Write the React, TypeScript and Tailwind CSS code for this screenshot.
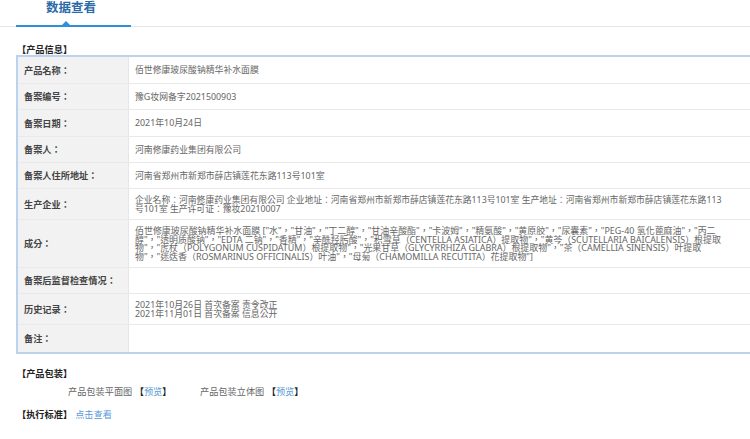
const rows: { label: string; lines: string[]; h: string; size?: string }[] = [
  { label: '产品名称：', lines: ['佰世修康玻尿酸钠精华补水面膜'], h: 'h-[27px]' },
  { label: '备案编号：', lines: ['豫G妆网备字2021500903'], h: 'h-[26px]' },
  { label: '备案日期：', lines: ['2021年10月24日'], h: 'h-[27px]' },
  { label: '备案人：', lines: ['河南修康药业集团有限公司'], h: 'h-[26px]' },
  { label: '备案人住所地址：', lines: ['河南省郑州市新郑市薛店镇莲花东路113号101室'], h: 'h-[26px]' },
  {
    label: '生产企业：',
    lines: [
      '企业名称：河南修康药业集团有限公司 企业地址：河南省郑州市新郑市薛店镇莲花东路113号101室 生产地址：河南省郑州市新郑市薛店镇莲花东路113',
      '号101室 生产许可证：豫妆20210007',
    ],
    h: 'h-[31px]',
    size: 'text-[8.8px]',
  },
  {
    label: '成分：',
    lines: [
      '佰世修康玻尿酸钠精华补水面膜 ["水"，"甘油"，"丁二醇"，"甘油辛酸酯"，"卡波姆"，"精氨酸"，"黄原胶"，"尿囊素"，"PEG-40 氢化蓖麻油"，"丙二',
      '醇"，"透明质酸钠"，"EDTA 二钠"，"香精"，"辛酰羟肟酸"，"积雪草（CENTELLA ASIATICA）提取物"，"黄芩（SCUTELLARIA BAICALENSIS）根提取',
      '物"，"虎杖（POLYGONUM CUSPIDATUM）根提取物"，"光果甘草（GLYCYRRHIZA GLABRA）根提取物"，"茶（CAMELLIA SINENSIS）叶提取',
      '物"，"迷迭香（ROSMARINUS OFFICINALIS）叶油"，"母菊（CHAMOMILLA RECUTITA）花提取物"]',
    ],
    h: 'h-[48px]',
    size: 'text-[8.95px]',
  },
  { label: '备案后监督检查情况：', lines: [], h: 'h-[26px]' },
  { label: '历史记录：', lines: ['2021年10月26日 首次备案 责令改正', '2021年11月01日 首次备案 信息公开'], h: 'h-[31px]' },
  { label: '备注：', lines: [], h: 'h-[27px]' },
]

export default function App() {
  return (
    <div className="w-[750px] h-[439px] overflow-hidden bg-white text-[#666] text-[8.85px] font-['Noto_Sans','Noto_Sans_CJK_TC',sans-serif]">
      <div className="h-[27px] border-b border-[#e6e6e6]">
        <div className="relative w-[115px] h-[27px] ml-[16px] border-b-2 border-[#2f8fd8] pl-[30px]">
          <h1 className="pt-[1px] text-[12.5px] leading-[14px] font-bold text-[#2a6aa8]">数据查看</h1>
          <span className="absolute left-[46px] bottom-0 w-0 h-0 border-x-[4px] border-b-[4px] border-x-transparent border-b-[#2f8fd8]" />
        </div>
      </div>

      <h2 className="mt-[18px] ml-[17px] text-[#222] font-bold leading-[10px] text-[9.2px]">【产品信息】</h2>

      <div className="ml-[16px] w-[760px] border-2 border-r-0 border-[#bcd3ee]">
        {rows.map(row => (
          <div key={row.label} className={`flex border-b border-[#e9e9e9] last:border-b-0 ${row.h}`}>
            <div className="w-[111px] shrink-0 flex items-center pl-[6px] pt-[1px] bg-[#f2f2f2] border-r border-[#e6e6e6] text-[9.2px] font-bold text-[#444]">
              {row.label}
            </div>
            <div className={`flex-1 flex flex-col justify-center pl-[6px] pt-[1px] leading-[8.5px] whitespace-nowrap ${row.size ?? ''}`}>
              {row.lines.map(line => <div key={line}>{line}</div>)}
            </div>
          </div>
        ))}
      </div>

      <h2 className="mt-[14px] ml-[17px] text-[#222] font-bold leading-[11px] text-[9.2px]">【产品包装】</h2>
      <div className="mt-[7px] ml-[68px] flex leading-[11px] text-[9.2px]">
        <span className="w-[132px]">产品包装平面图 <b className="text-[#222]">【</b><span className="text-[#5a9bd8]">预览</span><b className="text-[#222]">】</b></span>
        <span>产品包装立体图 <b className="text-[#222]">【</b><span className="text-[#5a9bd8]">预览</span><b className="text-[#222]">】</b></span>
      </div>
      <div className="mt-[12px] ml-[17px] flex leading-[11px] text-[9.2px]">
        <h2 className="text-[#222] font-bold">【执行标准】</h2>
        <a className="ml-[3px] text-[#5a9bd8]">点击查看</a>
      </div>
    </div>
  )
}
